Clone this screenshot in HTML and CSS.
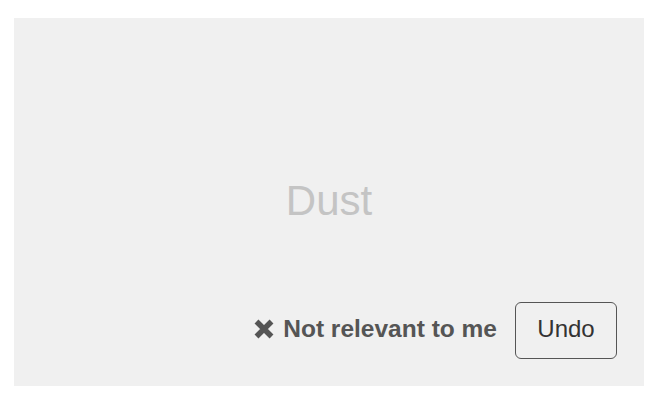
FILE: index.html
```html
<!DOCTYPE html>
<html lang="en">
<head>
    <meta charset="UTF-8">
    <title>Dust</title>
    <meta name="viewport" content="width=device-width">
    <link rel="stylesheet" href="styles.css">
</head>
<body>
    <section class="card">
        <div class="card-label">Dust</div>
        <div class="card-footer">
            <span class="dismissed">
                <svg class="dismissed-icon" viewBox="0 0 20 20" width="20" height="20" aria-hidden="true">
                    <path d="M2.5 2.5 L17.5 17.5 M17.5 2.5 L2.5 17.5" />
                </svg>
                Not relevant to me
            </span>
            <button class="undo" type="button">Undo</button>
        </div>
    </section>
</body>
</html>
```

FILE: styles.css
```css
*{
    padding: 0;
    margin: 0;
    box-sizing: border-box;
}
body{
    font-family: "Liberation Sans", Arial, sans-serif;
    padding: 18px 0 0 14px;
}
.card{
    width: 630px;
    height: 368px;
    background-color: #f0f0f0;
    display: flex;
    flex-direction: column;
    padding: 0 27px 27px;
}
.card-label{
    flex: 1;
    display: flex;
    align-items: center;
    justify-content: center;
    padding-top: 82px;
    font-size: 42px;
    color: #c4c4c4;
}
.card-footer{
    display: flex;
    justify-content: flex-end;
    align-items: center;
    gap: 18px;
}
.dismissed{
    display: flex;
    align-items: center;
    gap: 9px;
    padding-bottom: 4px;
    font-size: 24.5px;
    font-weight: bold;
    color: #555;
}
.dismissed-icon path{
    stroke: #555;
    stroke-width: 5.5;
    fill: none;
}
.undo{
    width: 102px;
    height: 57px;
    padding-bottom: 3px;
    border: 1px solid #555;
    border-radius: 6px;
    background: transparent;
    font-family: inherit;
    font-size: 24px;
    color: #333;
}
```
